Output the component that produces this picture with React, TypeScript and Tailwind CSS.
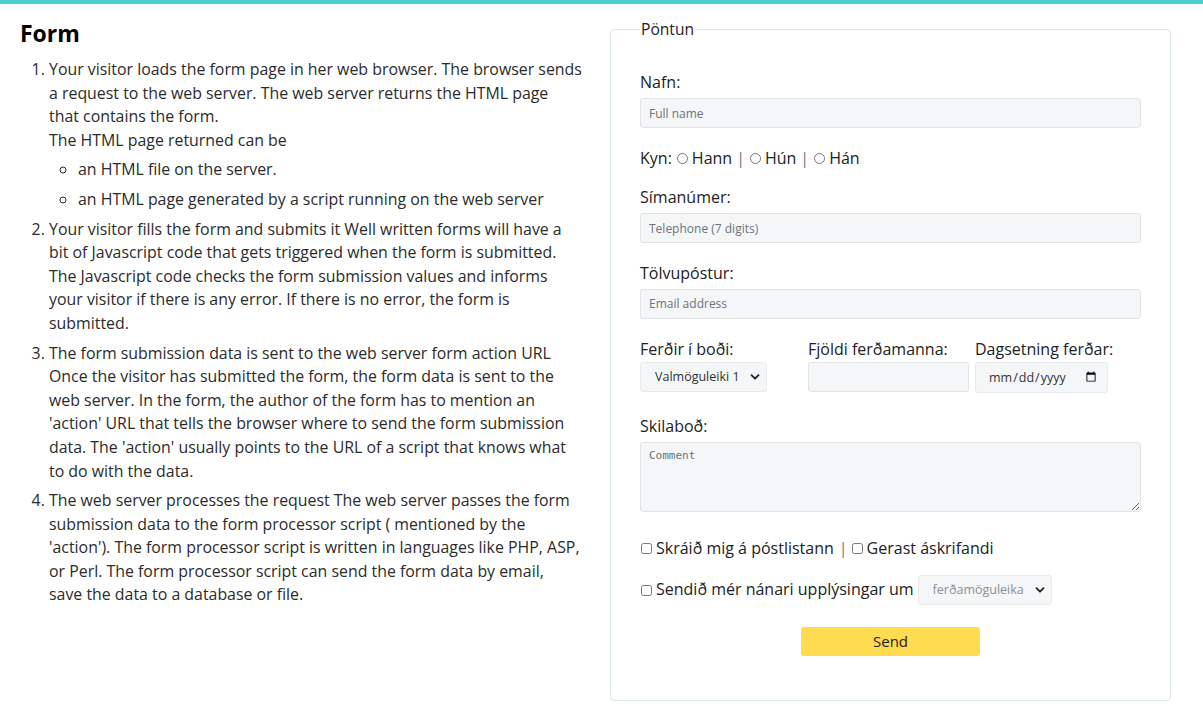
import React from 'react';

const inputCls =
  'block w-full h-[30px] px-2 bg-[#f4f6f7] border border-[#e0e6e8] rounded-[3px] text-[12px] text-[#222] placeholder:text-[#6c757d] focus:outline-none';

function Chevron() {
  return (
    <svg viewBox="0 0 10 10" className="w-[10px] h-[10px] pointer-events-none">
      <path d="M1.5 3.2 L5 6.7 L8.5 3.2" fill="none" stroke="#222" strokeWidth="1.9" strokeLinecap="round" strokeLinejoin="round" />
    </svg>
  );
}

function SelectBox({ width, label, muted }: { width: string; label: string; muted?: boolean }) {
  return (
    <div className={`relative ${width}`}>
      <select
        className={`appearance-none w-full h-[30px] pl-[14px] pr-5 bg-[#f4f6f7] border border-[#e8ecee] rounded-[3px] text-[12.5px] focus:outline-none ${muted ? 'text-[#8a9196]' : 'text-[#333]'}`}
        defaultValue={label}
      >
        <option>{label}</option>
      </select>
      <span className="absolute right-[7px] top-[10px] flex">
        <Chevron />
      </span>
    </div>
  );
}

export default function App() {
  return (
    <div className="min-h-screen bg-white text-[#222]" style={{ fontFamily: '"Open Sans", "Noto Sans", sans-serif' }}>
      <div className="h-[4px] bg-[#48d1cc]" />
      <div className="flex">
        {/* left: explanation */}
        <div className="w-[583px] shrink-0 pl-5 pt-[14px]">
          <h2 className="text-[23px] font-bold text-black leading-[30px]">Form</h2>
          <ol className="list-decimal pl-[29px] mt-[10px] text-[15.9px] leading-[23.6px] text-[#2b2b2b]">
            <li className="mb-1.5">
              Your visitor loads the form page in her web browser. The browser sends a request to the web server. The web
              server returns the HTML page
              <br />
              that contains the form.
              <br />
              The HTML page returned can be
              <ul className="list-[circle] pl-[29px] mt-1.5">
                <li className="mb-1.5">an HTML file on the server.</li>
                <li className="mb-1.5">an HTML page generated by a script running on the web server</li>
              </ul>
            </li>
            <li className="mb-1.5">
              Your visitor fills the form and submits it Well written forms will have a bit of Javascript code that gets
              triggered when the form is submitted. The Javascript code checks the form submission values and informs your
              visitor if there is any error. If there is no error, the form is submitted.
            </li>
            <li className="mb-1.5">
              The form submission data is sent to the web server form action URL Once the visitor has submitted the form,
              the form data is sent to the web server. In the form, the author of the form has to mention an 'action' URL
              that tells the browser where to send the form submission data. The 'action' usually points to the URL of a
              script that knows what to do with the data.
            </li>
            <li className="mb-1.5">
              The web server processes the request The web server passes the form submission data to the form processor
              script ( mentioned by the 'action'). The form processor script is written in languages like PHP, ASP, or
              Perl. The form processor script can send the form data by email,
              <br />
              save the data to a database or file.
            </li>
          </ol>
        </div>

        {/* right: order form */}
        <div className="pl-[27px] pt-[14px]">
          <fieldset className="w-[561px] border border-[#dde9e9] rounded-[4px] pl-[29px] pr-[29px] pt-[29px] pb-[44px] text-[16px] leading-[23.5px] text-[#222]">
            <legend className="px-px text-[15.6px] font-medium leading-[23.5px]">Pöntun</legend>

            <label className="block mb-1">Nafn:</label>
            <input type="text" placeholder="Full name" className={inputCls} />

            <div className="mt-[19px] flex items-center">
              <span>Kyn:</span>
              <input type="radio" name="kyn" className="w-[11px] h-[11px] ml-[5px] mr-[4px]" />
              <span>Hann</span>
              <span className="ml-[4px] mr-[5px] text-[#777]">|</span>
              <input type="radio" name="kyn" className="w-[11px] h-[11px] mr-[4px]" />
              <span>Hún</span>
              <span className="ml-[4px] mr-[5px] text-[#777]">|</span>
              <input type="radio" name="kyn" className="w-[11px] h-[11px] mr-[4px]" />
              <span>Hán</span>
            </div>

            <label className="block mt-[15px] mb-1">Símanúmer:</label>
            <input type="text" placeholder="Telephone (7 digits)" className={inputCls} />

            <label className="block mt-[19px] mb-[3px]">Tölvupóstur:</label>
            <input type="text" placeholder="Email address" className={inputCls} />

            <div className="mt-[19px] flex">
              <div className="w-[168px]">
                <label className="block mb-px">Ferðir í boði:</label>
                <SelectBox width="w-[127px]" label="Valmöguleiki 1" />
              </div>
              <div className="w-[167px]">
                <label className="block mb-px">Fjöldi ferðamanna:</label>
                <input type="number" className={`${inputCls} !w-[161px] h-[29px]`} />
              </div>
              <div>
                <label className="block mb-px">Dagsetning ferðar:</label>
                <input
                  type="date"
                  className="block w-[133px] h-[31px] pl-3 pr-2 bg-[#f4f6f7] border border-[#e8ecee] rounded-[3px] text-[12.5px] text-[#333] focus:outline-none"
                />
              </div>
            </div>

            <label className="block mt-[22px] mb-[3px]">Skilaboð:</label>
            <textarea
              placeholder="Comment"
              className="block w-full h-[70px] px-2 py-[6px] bg-[#f4f6f7] border border-[#e0e6e8] rounded-[3px] text-[11px] leading-[14px] placeholder:text-[#6c757d] focus:outline-none"
              style={{ fontFamily: '"DejaVu Sans Mono", monospace' }}
            />

            <div className="mt-[25px] flex items-center">
              <input type="checkbox" className="w-[11px] h-[11px] ml-px mr-1" />
              <span>Skráið mig á póstlistann</span>
              <span className="ml-[5px] mr-[4px] text-[#777]">|</span>
              <input type="checkbox" className="w-[11px] h-[11px] mr-1" />
              <span>Gerast áskrifandi</span>
            </div>

            <div className="mt-[15px] flex items-center">
              <input type="checkbox" className="w-[11px] h-[11px] ml-px mr-1" />
              <span>Sendið mér nánari upplýsingar um</span>
              <div className="ml-[4px]">
                <SelectBox width="w-[134px]" label="ferðamöguleika" muted />
              </div>
            </div>

            <div className="mt-[22px] flex justify-center">
              <button
                type="button"
                className="w-[179px] h-[29px] bg-[#fedb4f] rounded-[3px] text-[15px] text-[#222]"
              >
                Send
              </button>
            </div>
          </fieldset>
        </div>
      </div>
    </div>
  );
}
